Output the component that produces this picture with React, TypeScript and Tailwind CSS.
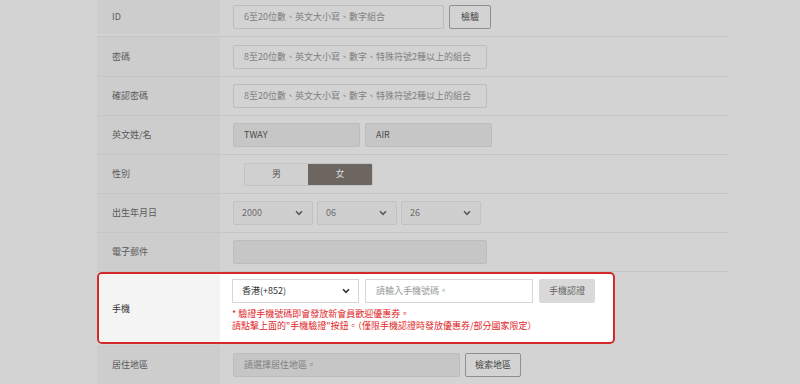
import React from "react";

const F = { fontFamily: '"Noto Sans CJK TC", "Noto Sans", sans-serif' };

function Chevron({ color = "#5a5a5a" }: { color?: string }) {
  return (
    <svg width="8" height="6" viewBox="0 0 8 6" className="shrink-0">
      <path d="M1 1.3 L4 4.3 L7 1.3" fill="none" stroke={color} strokeWidth="1.6" />
    </svg>
  );
}

function Row({ label, h, children, last, gap = "gap-[5px]" }: { label: string; h: string; children?: React.ReactNode; last?: boolean; gap?: string }) {
  return (
    <div className={`flex ${h} ${last ? "" : "border-b border-[#c6c6c6]"}`}>
      <div className="w-[123px] shrink-0 bg-[#cdcdcd] flex items-center pl-[15px] text-[9px] text-[#595959]">
        {label}
      </div>
      <div className={`flex-1 flex items-center pl-[13px] ${gap}`}>{children}</div>
    </div>
  );
}

function Input({ w, text, dark, filled }: { w: string; text?: string; dark?: boolean; filled?: boolean }) {
  return (
    <div
      className={`${w} h-[24px] border border-[#bdbdbd] rounded-[2px] flex items-center pl-[10px] text-[9px] ${
        dark ? "bg-[#c6c6c6]" : "bg-[#d3d3d3]"
      } ${filled ? "text-[#4a4a4a]" : "text-[#808080]"}`}
    >
      {text}
    </div>
  );
}

function Select({ text }: { text: string }) {
  return (
    <div className="w-[80px] h-[24px] border border-[#c2c2c2] rounded-[2px] bg-[#cfcfcf] flex items-center justify-between pl-[8px] pr-[9px] text-[9px] text-[#6e6e6e]">
      <span>{text}</span>
      <Chevron />
    </div>
  );
}

export default function App() {
  return (
    <div style={F} className="w-[800px] h-[384px] overflow-hidden bg-[#d3d3d3]">
      <div className="ml-[97px] w-[632px]">
        <Row label="ID" h="h-[37px] pb-[2px]">
          <Input w="w-[211px]" text="6至20位數、英文大小寫、數字組合" />
          <div className="w-[42px] h-[24px] border border-[#8f8f8f] rounded-[2px] flex items-center justify-center text-[9px] text-[#444]">
            檢驗
          </div>
        </Row>
        <Row label="密碼" h="h-[40px]">
          <Input w="w-[254px]" text="8至20位數、英文大小寫、數字、特殊符號2種以上的組合" />
        </Row>
        <Row label="確認密碼" h="h-[39px]">
          <Input w="w-[254px]" text="8至20位數、英文大小寫、數字、特殊符號2種以上的組合" />
        </Row>
        <Row label="英文姓/名" h="h-[39px]">
          <Input w="w-[127px]" text="TWAY" dark filled />
          <Input w="w-[127px]" text="AIR" dark filled />
        </Row>
        <Row label="性別" h="h-[39px]">
          <div className="ml-[11px] flex h-[23px] rounded-[2px] border border-[#c2c2c2] overflow-hidden">
            <div className="w-[63px] flex items-center justify-center text-[9px] text-[#555] bg-[#d0d0d0]">男</div>
            <div className="w-[64px] flex items-center justify-center text-[9px] text-[#d6d6d6] bg-[#6c6560]">女</div>
          </div>
        </Row>
        <Row label="出生年月日" h="h-[39px]" gap="gap-[4px]">
          <Select text="2000" />
          <Select text="06" />
          <Select text="26" />
        </Row>
        <Row label="電子郵件" h="h-[39px]">
          <Input w="w-[254px]" dark />
        </Row>
        <div className="flex h-[72px]">
          <div className="w-[518px] h-[72px] border-[2.5px] border-[#d42a27] rounded-[5px] overflow-hidden flex bg-white">
            <div className="w-[121px] shrink-0 bg-[#f4f4f4] flex items-center pl-[13px] pt-[1px] text-[9px] text-[#333]">
              手機
            </div>
            <div className="flex-1 flex flex-col pl-[12px] pt-[5px]">
              <div className="flex gap-[6px]">
                <div className="w-[127px] h-[24px] border border-[#d6d6d6] flex items-center justify-between pl-[9px] pr-[8px] text-[9px] text-[#333]">
                  <span>香港(+852)</span>
                  <Chevron color="#333" />
                </div>
                <div className="w-[168px] h-[24px] border border-[#d6d6d6] flex items-center pl-[10px] text-[9px] text-[#999]">
                  請輸入手機號碼。
                </div>
                <div className="w-[56px] h-[24px] bg-[#d9d9d9] rounded-[2px] flex items-center justify-center text-[9px] text-[#666]">
                  手機認證
                </div>
              </div>
              <div className="mt-[5px] text-[9px] leading-[12px] text-[#e0261f]">
                <div>* 驗證手機號碼即會發放新會員歡迎優惠券。</div>
                <div>請點擊上面的"手機驗證"按鈕。（僅限手機認證時發放優惠券/部分國家限定）</div>
              </div>
            </div>
          </div>
          <div className="flex-1" />
        </div>
        <Row label="居住地區" h="h-[40px] pt-[1px]" last>
          <Input w="w-[227px]" text="請選擇居住地區。" dark />
          <div className="w-[56px] h-[24px] border border-[#8f8f8f] rounded-[2px] flex items-center justify-center text-[9px] text-[#444]">
            檢索地區
          </div>
        </Row>
      </div>
    </div>
  );
}
